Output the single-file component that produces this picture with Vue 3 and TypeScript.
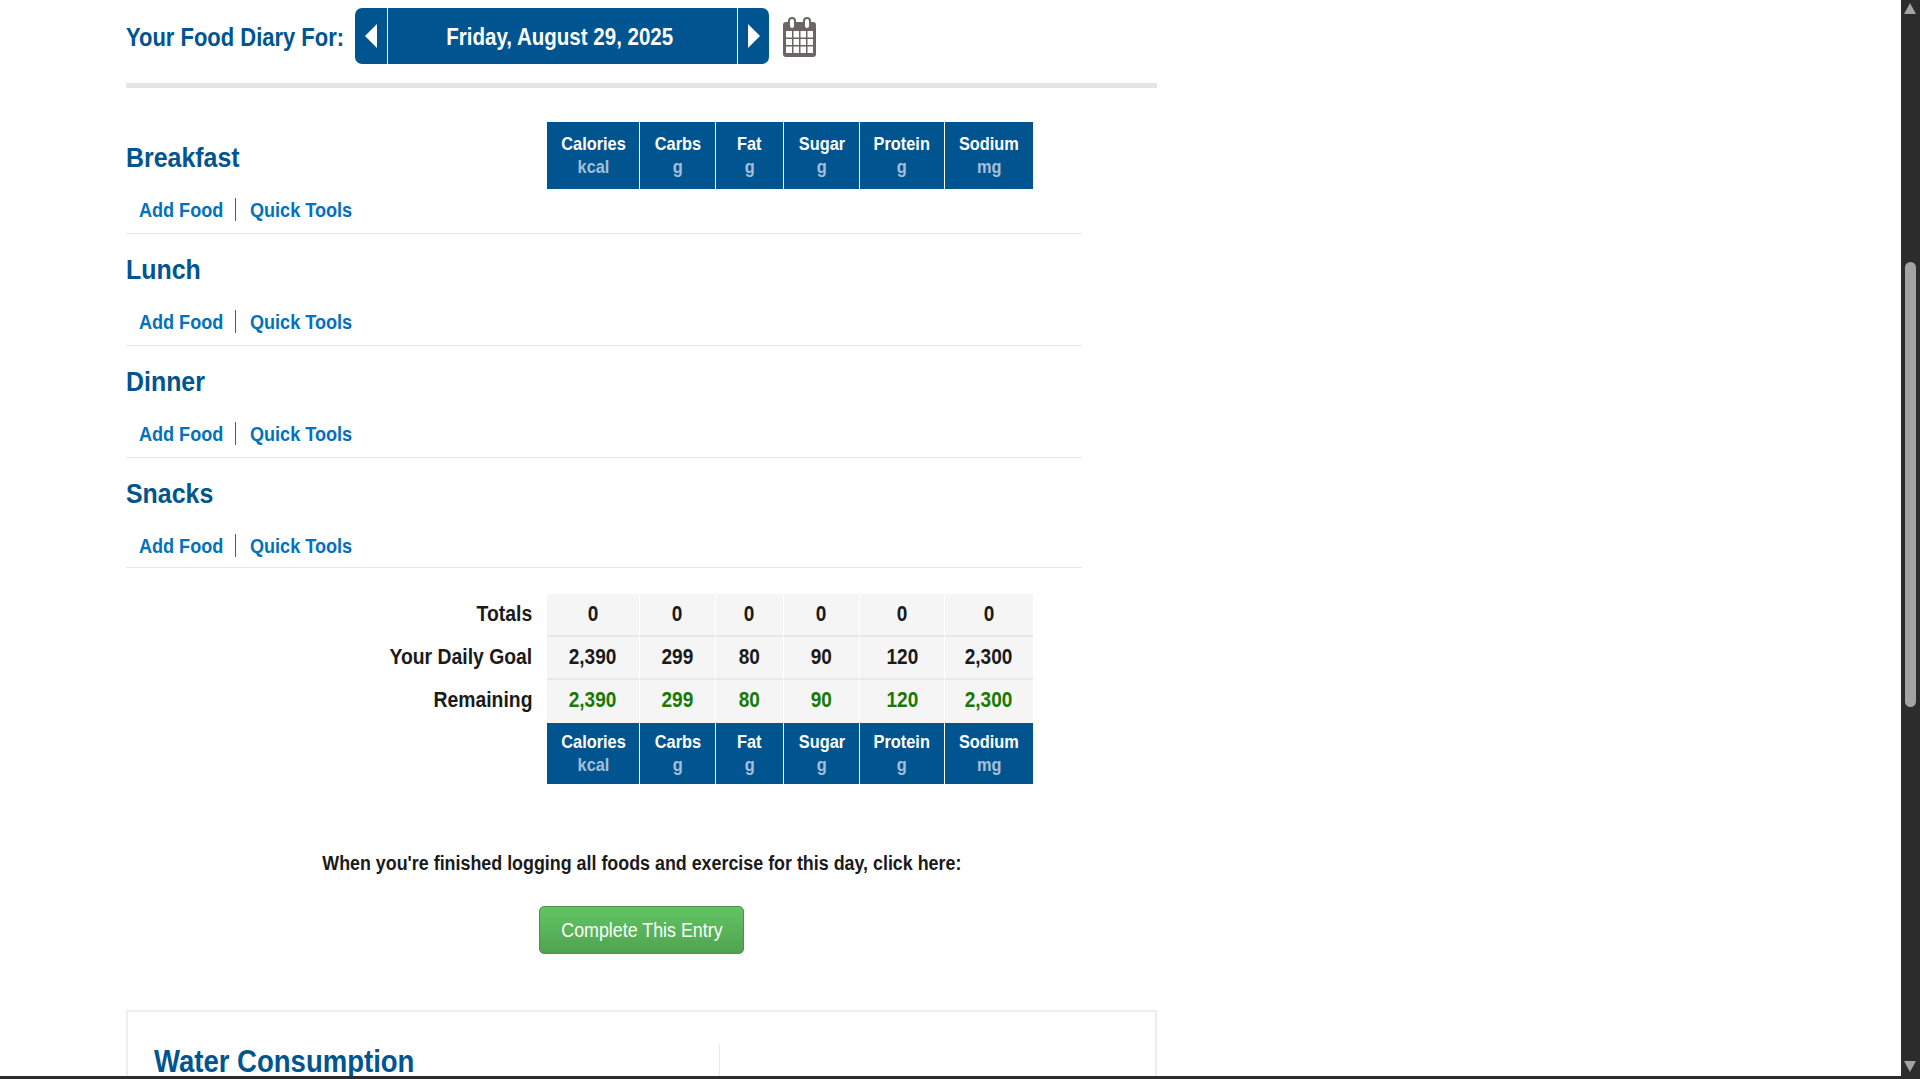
<script setup lang="ts">
interface Macro {
  name: string
  unit: string
}

const macros: Macro[] = [
  { name: 'Calories', unit: 'kcal' },
  { name: 'Carbs', unit: 'g' },
  { name: 'Fat', unit: 'g' },
  { name: 'Sugar', unit: 'g' },
  { name: 'Protein', unit: 'g' },
  { name: 'Sodium', unit: 'mg' }
]

const meals = ['Breakfast', 'Lunch', 'Dinner', 'Snacks']

const summary = [
  { label: 'Totals', values: ['0', '0', '0', '0', '0', '0'], good: false },
  { label: 'Your Daily Goal', values: ['2,390', '299', '80', '90', '120', '2,300'], good: false },
  { label: 'Remaining', values: ['2,390', '299', '80', '90', '120', '2,300'], good: true }
]
</script>

<template>
  <div class="page">
    <main class="diary">
      <header class="date-row">
        <h2 class="diary-title">Your Food Diary For:</h2>
        <div class="date-nav">
          <a class="nav-arrow"><span class="tri tri-left"></span></a>
          <div class="nav-date"><span>Friday, August 29, 2025</span></div>
          <a class="nav-arrow next"><span class="tri tri-right"></span></a>
        </div>
        <svg class="calendar" viewBox="0 0 33 40" width="33" height="40">
          <rect y="5" width="33" height="35" rx="3" fill="#6b6663" />
          <rect x="6" y="1" width="6" height="11" rx="3" fill="#fff" stroke="#6b6663" stroke-width="2" />
          <rect x="21" y="1" width="6" height="11" rx="3" fill="#fff" stroke="#6b6663" stroke-width="2" />
          <path d="M3 14h6v6.500H3zM10.500 14h5.500v6.500h-5.500zM17.500 14h5.500v6.500h-5.500zM24.500 14H30v6.500h-5.500zM3 22h6v6H3zM10.500 22h5.500v6h-5.500zM17.500 22h5.500v6h-5.500zM24.500 22H30v6h-5.500zM3 29.500h6V36H3zM10.500 29.500h5.500V36h-5.500zM17.500 29.500h5.500V36h-5.500zM24.500 29.500H30V36h-5.500z" fill="#fff" />
        </svg>
      </header>

      <div class="rule"></div>

      <section v-for="(meal, i) in meals" :key="meal" class="meal" :class="{ last: i === meals.length - 1 }">
        <h3 class="meal-name">{{ meal }}</h3>
        <div v-if="i === 0" class="macro-head tall">
          <div v-for="m in macros" :key="m.name" class="macro-cell">
            <span>{{ m.name }}</span>
            <span class="unit">{{ m.unit }}</span>
          </div>
        </div>
        <div class="meal-links">
          <a><span>Add Food</span></a>
          <a><span>Quick Tools</span></a>
        </div>
      </section>

      <section class="summary">
        <div v-for="row in summary" :key="row.label" class="summary-row">
          <div class="summary-label"><span>{{ row.label }}</span></div>
          <div
            v-for="(v, i) in row.values"
            :key="i"
            class="summary-cell"
            :class="{ good: row.good }"
          >
            <span>{{ v }}</span>
          </div>
        </div>
        <div class="summary-row foot">
          <div></div>
          <div class="macro-head">
            <div v-for="m in macros" :key="m.name" class="macro-cell">
              <span>{{ m.name }}</span>
              <span class="unit">{{ m.unit }}</span>
            </div>
          </div>
        </div>
      </section>

      <p class="finish-note"><span>When you're finished logging all foods and exercise for this day, click here:</span></p>
      <div class="finish-action">
        <button class="complete-btn"><span>Complete This Entry</span></button>
      </div>

      <section class="water">
        <div class="water-left">
          <h2 class="water-title">Water Consumption</h2>
        </div>
        <div class="water-right"></div>
      </section>
    </main>

    <div class="scrollbar">
      <span class="sb-arrow up"></span>
      <span class="sb-thumb"></span>
      <span class="sb-arrow down"></span>
    </div>
    <div class="bottom-edge"></div>
  </div>
</template>

<style>
html,
body {
  margin: 0;
  height: 100%;
  overflow: hidden;
  background: #fff;
}
</style>

<style scoped>
.page {
  height: 1079px;
  overflow: hidden;
  font-family: "Liberation Sans", Arial, sans-serif;
  color: #1a1a1a;
}

.diary {
  width: 1031px;
  margin-left: 126px;
}

.date-row {
  display: flex;
  align-items: center;
  padding-top: 8px;
  height: 56px;
}

.diary-title {
  margin: 0;
  padding-top: 2px;
  flex: 0 0 229px;
  min-width: 0;
  font-size: 26px;
  font-weight: 700;
  color: #00548f;
  white-space: nowrap;
  transform: scaleX(0.845);
  transform-origin: left center;
}

.date-nav {
  display: flex;
  width: 414px;
  height: 56px;
  border-radius: 7px;
  background: #00548f;
  color: #fff;
  overflow: hidden;
}

.nav-arrow {
  width: 32px;
  display: flex;
  align-items: center;
  justify-content: center;
  flex-shrink: 0;
}

.nav-arrow.next {
  width: 31px;
}

.nav-date {
  flex: 1;
  display: flex;
  align-items: center;
  justify-content: center;
  padding-top: 2px;
  padding-right: 5px;
  font-size: 24px;
  font-weight: 700;
  white-space: nowrap;
  border-left: 1px solid #fff;
  border-right: 1px solid #fff;
}

.nav-date span {
  transform: scaleX(0.855);
}

.tri {
  width: 0;
  height: 0;
  border-top: 12px solid transparent;
  border-bottom: 12px solid transparent;
}

.tri-left {
  border-right: 12px solid #fff;
}

.tri-right {
  border-left: 12px solid #fff;
}

.calendar {
  margin-left: 14px;
  margin-top: 2px;
  flex-shrink: 0;
}

.rule {
  height: 5px;
  margin-top: 19px;
  margin-bottom: 34px;
  background: #e5e5e5;
}

.meal {
  display: grid;
  grid-template-columns: 421px auto;
  grid-template-rows: 67px 44px;
  width: 956px;
  border-bottom: 1px solid #e8e8e8;
}

.meal.last {
  grid-template-rows: 67px 42px;
}

.meal-name {
  margin: 0;
  padding-top: 5px;
  align-self: center;
  font-size: 28px;
  font-weight: 700;
  color: #00548f;
  transform: scaleX(0.89);
  transform-origin: left center;
}

.meal-links {
  grid-column: 1 / -1;
  grid-row: 2;
  display: flex;
  align-items: center;
  padding-left: 13px;
  height: 41px;
  font-size: 21px;
  font-weight: 700;
  color: #0070c0;
}

.meal-links a {
  display: block;
  line-height: 23px;
  white-space: nowrap;
}

.meal-links span {
  display: inline-block;
  transform: scaleX(0.86);
  transform-origin: left center;
}

.meal-links a:first-child {
  width: 96px;
  border-right: 1px solid #0070c0;
  margin-right: 14px;
}

.macro-head {
  display: grid;
  grid-template-columns: 93px 76px 68px 76px 85px 88px;
  width: 486px;
  height: 61px;
}

.macro-head.tall {
  height: 67px;
}

.macro-cell {
  display: flex;
  flex-direction: column;
  align-items: center;
  justify-content: center;
  padding-bottom: 2px;
  box-sizing: border-box;
  background: #00548f;
  color: #fff;
  font-size: 19px;
  font-weight: 700;
  line-height: 23px;
  border-right: 1px solid #fff;
}

.macro-cell span {
  transform: scaleX(0.86);
}

.macro-cell:last-child {
  border-right: 0;
}

.unit {
  color: #a6bfd8;
}

.summary {
  margin-top: 26px;
}

.summary-row {
  display: grid;
  grid-template-columns: 421px 93px 76px 68px 76px 85px 88px;
  height: 43px;
}

.summary-row.foot {
  grid-template-columns: 421px 486px;
  height: 61px;
}

.summary-label {
  padding-right: 15px;
  font-size: 22px;
  font-weight: 700;
  text-align: right;
  line-height: 40px;
}

.summary-label span {
  display: inline-block;
  transform: scaleX(0.88);
  transform-origin: right center;
}

.summary-cell {
  display: flex;
  align-items: center;
  justify-content: center;
  padding-bottom: 1px;
  box-sizing: border-box;
  background: #f5f5f5;
  border-right: 1px solid #fff;
  border-bottom: 2px solid #e8e8e8;
  font-size: 22px;
  font-weight: 700;
}

.summary-cell span {
  transform: scaleX(0.865);
}

.summary-cell:last-child {
  border-right: 0;
}

.summary-cell.good {
  color: #177a00;
  border-bottom-color: #f5f5f5;
}

.finish-note {
  margin: 66px 0 0;
  font-size: 20px;
  line-height: 26px;
  font-weight: 700;
  text-align: center;
}

.finish-note span {
  display: inline-block;
  transform: scaleX(0.893);
}

.finish-action {
  display: flex;
  justify-content: center;
  margin-top: 30px;
}

.complete-btn {
  width: 205px;
  height: 48px;
  padding: 0;
  border: 1px solid #4a8f4a;
  border-radius: 5px;
  background: linear-gradient(#62c462, #51a351);
  color: #fff;
  font-family: inherit;
  font-size: 21px;
  white-space: nowrap;
}

.complete-btn span {
  display: inline-block;
  transform: scaleX(0.85);
}

.water {
  display: flex;
  margin-top: 56px;
  height: 200px;
  border: 2px solid #eee;
  box-sizing: border-box;
}

.water-left {
  width: 591px;
  padding: 31px 0 0 26px;
  box-sizing: border-box;
}

.water-title {
  margin: 0;
  font-size: 32px;
  font-weight: 700;
  color: #00548f;
  white-space: nowrap;
  transform: scaleX(0.86);
  transform-origin: left center;
}

.water-right {
  flex: 1;
  margin-top: 32px;
  border-left: 1px solid #e8e8e8;
}

.scrollbar {
  position: fixed;
  top: 0;
  right: 0;
  bottom: 0;
  width: 19px;
  background: #2c2c2c;
}

.sb-arrow {
  position: absolute;
  left: 3px;
  width: 0;
  height: 0;
  border-left: 6.500px solid transparent;
  border-right: 6.500px solid transparent;
}

.sb-arrow.up {
  top: 3px;
  border-bottom: 11px solid #a3a3a3;
}

.sb-arrow.down {
  bottom: 7px;
  border-top: 11px solid #a3a3a3;
}

.sb-thumb {
  position: absolute;
  left: 4px;
  top: 262px;
  width: 11px;
  height: 445px;
  border-radius: 6px;
  background: #a3a3a3;
}

.bottom-edge {
  position: fixed;
  left: 0;
  right: 0;
  bottom: 0;
  height: 3px;
  background: #2c2c2c;
}
</style>
